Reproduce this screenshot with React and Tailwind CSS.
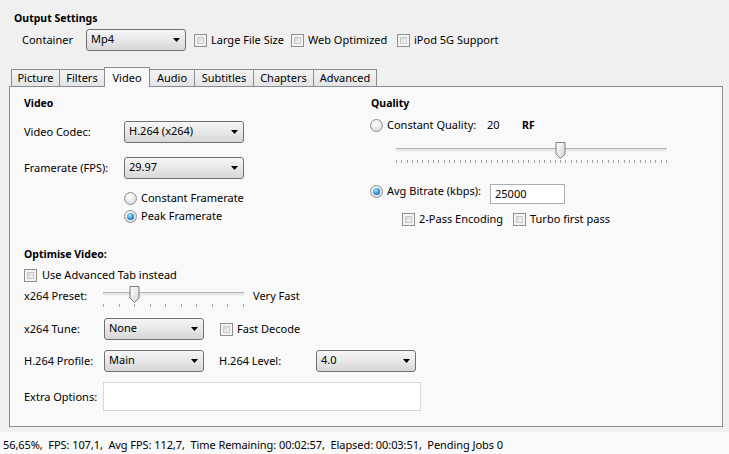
import React from "react";

const Checkbox = () => (
  <span className="inline-block w-[13px] h-[13px] border border-[#8f8f8f] bg-[#f4f4f4] p-[2px] shrink-0">
    <span className="block w-full h-full border border-[#c9c9c9] bg-[linear-gradient(135deg,#d6d6d6,#f7f7f7)]" />
  </span>
);

const Radio = ({ checked }) => (
  <span className="inline-flex items-center justify-center w-[13px] h-[13px] rounded-full border border-[#8f8f8f] bg-[radial-gradient(circle_at_40%_35%,#ffffff,#d3d3d3)] shrink-0">
    {checked && (
      <span className="block w-[7px] h-[7px] rounded-full bg-[radial-gradient(circle_at_40%_35%,#a8e6ff,#2b8fd6_55%,#0b4e8f)]" />
    )}
  </span>
);

const Combo = ({ value, w }) => (
  <div
    className={`flex items-center justify-between h-[22px] rounded-[3px] border border-[#707070] bg-[linear-gradient(#f6f6f6,#e6e6e6_55%,#d7d7d7)] pl-[4px] pr-[5px] shrink-0 ${w}`}
  >
    <span className="leading-[16px] -mt-[2px]">{value}</span>
    <svg width="7" height="4" viewBox="0 0 7 4" className="shrink-0">
      <path d="M0 0 H7 L3.5 4 Z" fill="#000" />
    </svg>
  </div>
);

const Slider = ({ width, ticks, thumbX }) => {
  const marks = [];
  for (let i = 0; i < ticks; i++) {
    const x = Math.round((i * (width - 1)) / (ticks - 1)) + 0.5;
    marks.push(<line key={i} x1={x} y1="19" x2={x} y2="22" stroke="#a3a3a3" strokeWidth="1" />);
  }
  const t = thumbX;
  return (
    <svg width={width} height="22" viewBox={`0 0 ${width} 22`} className="shrink-0 block">
      <defs>
        <linearGradient id={`th${width}`} x1="0" y1="0" x2="1" y2="1">
          <stop offset="0" stopColor="#ffffff" />
          <stop offset="1" stopColor="#d4d4d4" />
        </linearGradient>
      </defs>
      <rect x="0" y="7" width={width} height="3" fill="#e4e7e7" />
      <line x1="0" y1="7.5" x2={width} y2="7.5" stroke="#b3b3b3" />
      <line x1="0" y1="10.5" x2={width} y2="10.5" stroke="#f4f4f4" />
      {marks}
      <path
        d={`M${t - 4.5} 1.5 H${t + 4.5} V13 L${t} 17.5 L${t - 4.5} 13 Z`}
        fill={`url(#th${width})`}
        stroke="#7d7d7d"
        strokeWidth="1"
      />
    </svg>
  );
};

const tabs = [
  { name: "Picture", cls: "w-[48px] h-[17px] border-l border-t" },
  { name: "Filters", cls: "w-[45px] h-[17px] border-l border-t" },
  { name: "Video", cls: "w-[46px] h-[20px] -mb-[1px] border-l border-t border-r bg-[#f9f9f9]", sel: true },
  { name: "Audio", cls: "w-[44px] h-[17px] border-t" },
  { name: "Subtitles", cls: "w-[59px] h-[17px] border-l border-t" },
  { name: "Chapters", cls: "w-[60px] h-[17px] border-l border-t" },
  { name: "Advanced", cls: "w-[64px] h-[17px] border-l border-t border-r" },
];

export default function App() {
  return (
    <div className="w-[729px] h-[454px] bg-[#f0f0f0] text-[11px] leading-[16px] text-black flex flex-col overflow-hidden font-['Noto_Sans',sans-serif]">
      <div className="pl-[14px] pt-[10px] font-bold text-[10.5px] leading-[16px]">Output Settings</div>

      <div className="mt-[3px] h-[22px] flex items-center pl-[22px]">
        <span className="w-[64px]">Container</span>
        <Combo value="Mp4" w="w-[100px]" />
        <div className="ml-[8px] w-[97px] flex items-center gap-[4px]">
          <Checkbox />
          <span>Large File Size</span>
        </div>
        <div className="w-[106px] flex items-center gap-[4px]">
          <Checkbox />
          <span>Web Optimized</span>
        </div>
        <div className="flex items-center gap-[4px]">
          <Checkbox />
          <span>iPod 5G Support</span>
        </div>
      </div>

      <div className="mt-[16px] h-[19px] flex items-end ml-[11px] relative z-10">
        {tabs.map((t) => (
          <div
            key={t.name}
            className={`flex items-center justify-center border-[#898c95] ${t.cls} ${
              t.sel ? "pt-[1px]" : "bg-[linear-gradient(#f4f4f4,#e3e3e3)]"
            }`}
          >
            {t.name}
          </div>
        ))}
      </div>

      <div className="ml-[9px] w-[714px] h-[341px] border border-[#898c95] bg-[#f9f9f9] pl-[14px] pt-[8px] flex flex-col">
        <div className="flex">
          <div className="w-[346px] flex flex-col">
            <div className="font-bold text-[10.5px] h-[16px]">Video</div>
            <div className="mt-[10px] h-[22px] flex items-center">
              <span className="w-[100px]">Video Codec:</span>
              <Combo value="H.264 (x264)" w="w-[120px]" />
            </div>
            <div className="mt-[14px] h-[22px] flex items-center">
              <span className="w-[100px]">Framerate (FPS):</span>
              <Combo value="29.97" w="w-[120px]" />
            </div>
            <div className="mt-[11px] h-[16px] flex items-center pl-[100px] gap-[4px]">
              <Radio />
              <span>Constant Framerate</span>
            </div>
            <div className="mt-[2px] h-[16px] flex items-center pl-[100px] gap-[4px]">
              <Radio checked />
              <span>Peak Framerate</span>
            </div>
          </div>

          <div className="flex flex-col">
            <div className="font-bold text-[10.5px] h-[16px] pl-[1px]">Quality</div>
            <div className="mt-[6px] h-[16px] flex items-center">
              <Radio />
              <span className="ml-[4px] w-[100px]">Constant Quality:</span>
              <span className="w-[35px]">20</span>
              <span className="font-bold text-[10.5px]">RF</span>
            </div>
            <div className="mt-[8px] ml-[26px]">
              <Slider width={271} ticks={52} thumbX={164.5} />
            </div>
            <div className="mt-[20px] flex items-start">
              <div className="h-[16px] flex items-center">
                <Radio checked />
                <span className="ml-[4px] w-[103px]">Avg Bitrate (kbps):</span>
              </div>
              <div className="mt-[1px] w-[75px] h-[20px] border border-[#abadb3] bg-white pl-[4px] flex items-center">
                25000
              </div>
            </div>
            <div className="mt-[7px] h-[16px] flex items-center pl-[32px]">
              <div className="w-[111px] flex items-center gap-[4px]">
                <Checkbox />
                <span>2-Pass Encoding</span>
              </div>
              <div className="flex items-center gap-[4px]">
                <Checkbox />
                <span>Turbo first pass</span>
              </div>
            </div>
          </div>
        </div>

        <div className="mt-[19px] font-bold text-[10.5px] h-[16px]">Optimise Video:</div>
        <div className="mt-[5px] h-[16px] flex items-center gap-[5px]">
          <Checkbox />
          <span>Use Advanced Tab instead</span>
        </div>
        <div className="mt-[2px] h-[22px] flex items-center">
          <span className="w-[79px]">x264 Preset:</span>
          <Slider width={141} ticks={10} thumbX={31.5} />
          <span className="ml-[9px]">Very Fast</span>
        </div>
        <div className="mt-[11px] h-[22px] flex items-center">
          <span className="w-[80px]">x264 Tune:</span>
          <Combo value="None" w="w-[100px]" />
          <div className="ml-[16px] flex items-center gap-[4px]">
            <Checkbox />
            <span>Fast Decode</span>
          </div>
        </div>
        <div className="mt-[10px] h-[22px] flex items-center">
          <span className="w-[80px]">H.264 Profile:</span>
          <Combo value="Main" w="w-[100px]" />
          <span className="ml-[15px] w-[97px]">H.264 Level:</span>
          <Combo value="4.0" w="w-[100px]" />
        </div>
        <div className="mt-[10px] h-[29px] flex items-center">
          <span className="w-[79px]">Extra Options:</span>
          <div className="w-[318px] h-[29px] border border-[#d9d9d9] bg-white" />
        </div>
      </div>

      <div className="mt-[5px] h-[22px] bg-[#f9f9f9] pl-[3px] pt-[5px] whitespace-pre tracking-[-0.07px]">
        {"56,65%,  FPS: 107,1,  Avg FPS: 112,7,  Time Remaining: 00:02:57,  Elapsed: 00:03:51,  Pending Jobs 0"}
      </div>
    </div>
  );
}
